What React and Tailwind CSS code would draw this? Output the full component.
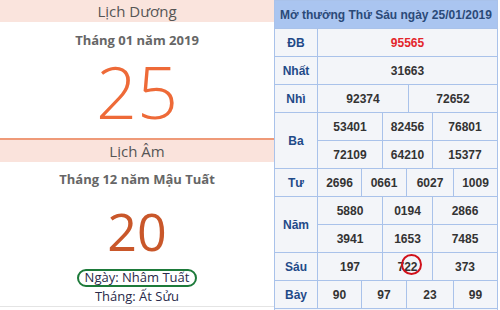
const rows = [
  { label: 'ĐB', cells: [['95565']], red: true },
  { label: 'Nhất', cells: [['31663']] },
  { label: 'Nhì', cells: [['92374', '72652']] },
  { label: 'Ba', cells: [['53401', '82456', '76801'], ['72109', '64210', '15377']] },
  { label: 'Tư', cells: [['2696', '0661', '6027', '1009']] },
  { label: 'Năm', cells: [['5880', '0194', '2866'], ['3941', '1653', '7485']] },
  { label: 'Sáu', cells: [['197', '722', '373']] },
  { label: 'Bảy', cells: [['90', '97', '23', '99']] },
]

const widths = {
  1: ['w-[180px]'],
  2: ['w-[91px]', 'w-[89px]'],
  3: ['w-[65px]', 'w-[50px]', 'w-[65px]'],
  4: ['w-[44px]', 'w-[45px]', 'w-[47px]', 'w-[44px]'],
}

function Cell({ value, w, red }) {
  const circled = value === '722'
  return (
    <div className={`${w} h-[28px] flex items-center justify-center border-l border-b border-[#a9c2ea] ${red ? 'text-[#e3262b]' : 'text-[#333]'}`}>
      {circled ? (
        <span className="relative">
          7<span>22</span>
          <span className="absolute right-[-4px] top-[-4px] w-[21px] h-[21px] rounded-full border-2 border-[#d0101a]" />
        </span>
      ) : value}
    </div>
  )
}

function Calendar() {
  return (
    <div className="w-[274px] h-[310px] flex flex-col bg-white font-['Open_Sans',sans-serif]">
      <div className="h-[22px] bg-[#fae4dd] flex items-center justify-center text-[15px] text-[#555]">Lịch Dương</div>
      <div className="h-[116px] flex flex-col items-center overflow-hidden">
        <div className="mt-[9px] text-[13px] font-bold text-[#666]">Tháng 01 năm 2019</div>
        <div className="text-[72px] leading-[72px] mt-[4px] text-[#ee6a38] font-light">25</div>
      </div>
      <div className="h-[24px] bg-[#fae3dc] border-t-2 border-[#ef9a78] flex items-center justify-center text-[15px] text-[#555]">Lịch Âm</div>
      <div className="flex-1 flex flex-col items-center border-b border-[#e4e4e4] mb-[3px]">
        <div className="mt-[8px] text-[13px] font-bold text-[#666]">Tháng 12 năm Mậu Tuất</div>
        <div className="text-[52px] leading-none mt-[15px] text-[#c9572a]">20</div>
        <div className="mt-[12px] px-[6px] h-[18px] flex items-center rounded-[9px] border-2 border-[#1d7a3a] text-[13px] text-[#2a2a4a]">Ngày: Nhâm Tuất</div>
        <div className="text-[13px] text-[#2a2a4a] leading-[18px]">Tháng: Ất Sửu</div>
      </div>
    </div>
  )
}

function Results() {
  return (
    <div className="w-[224px] h-[310px] border-l border-r border-t border-[#a9c2ea] bg-[#f3f5f9] font-['Liberation_Sans',Arial,sans-serif] font-bold text-[12px]">
      <div className="h-[28px] bg-[#aac5f0] flex items-center justify-center text-[12px] text-[#2b4a78] border-b border-[#a9c2ea]">
        Mở thưởng Thứ Sáu ngày 25/01/2019
      </div>
      {rows.map((r) => (
        <div key={r.label} className="flex">
          <div className="w-[42px] flex items-center justify-center border-b border-[#a9c2ea] text-[#1f4a88]">{r.label}</div>
          <div className="flex flex-col">
            {r.cells.map((line, i) => (
              <div key={i} className="flex">
                {line.map((v, j) => (
                  <Cell key={j} value={v} w={widths[line.length][j]} red={r.red} />
                ))}
              </div>
            ))}
          </div>
        </div>
      ))}
    </div>
  )
}

export default function App() {
  return (
    <div className="w-[500px] h-[310px] flex bg-white overflow-hidden">
      <Calendar />
      <Results />
    </div>
  )
}
